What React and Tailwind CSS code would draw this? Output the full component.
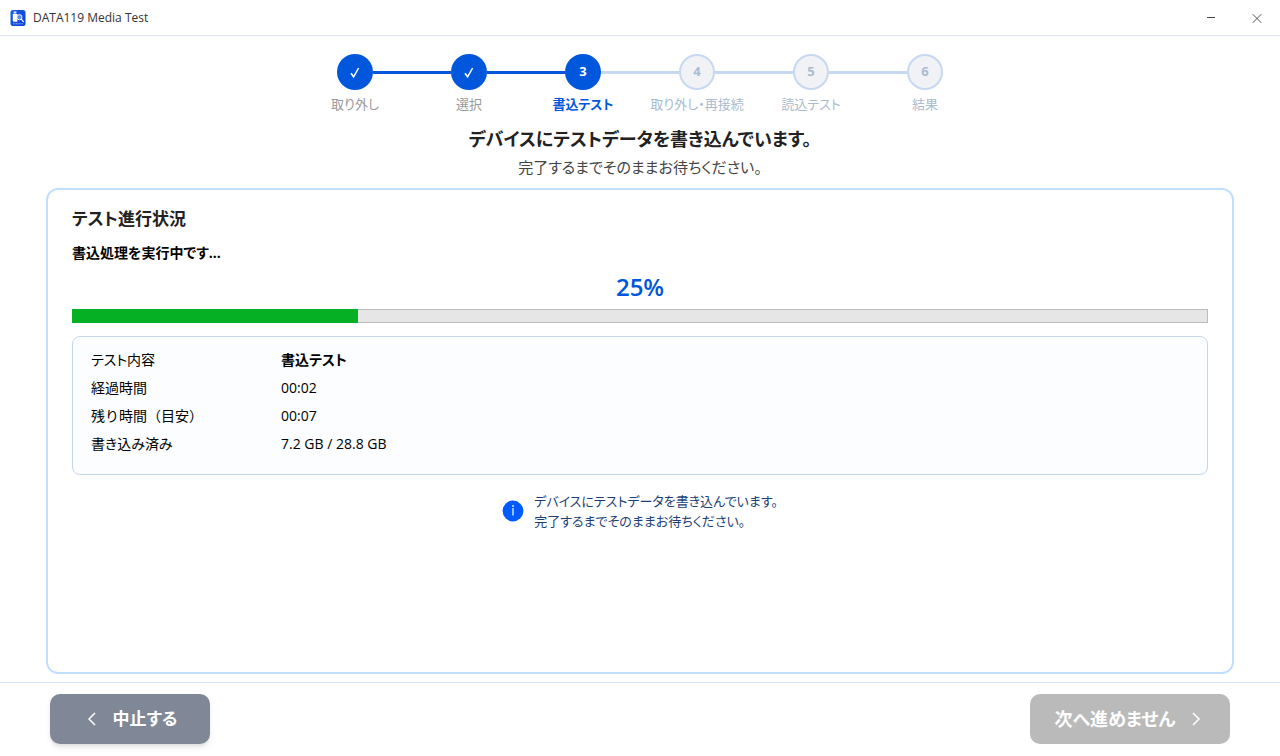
import React from 'react';
import clsx from 'clsx';

const STEPS = ['取り外し', '選択', '書込テスト', '取り外し・再接続', '読込テスト', '結果'];
const CURRENT_STEP = 2;

const progress = {
    barPercent: 25.2,
    label: '25%',
    rows: [
        { name: 'テスト内容', value: '書込テスト', strong: true },
        { name: '経過時間', value: '00:02' },
        { name: '残り時間（目安）', value: '00:07', fullWidth: true },
        { name: '書き込み済み', value: '7.2 GB / 28.8 GB' },
    ],
};

const AppIcon = () => (
    <svg viewBox="0 0 16 16" className="w-4 h-4" aria-hidden="true">
        <defs>
            <linearGradient id="appIconBg" x1="0" y1="0" x2="1" y2="1">
                <stop offset="0" stopColor="#1c5fe8" />
                <stop offset="1" stopColor="#0a3fd0" />
            </linearGradient>
        </defs>
        <rect x="0.5" width="15" height="16" rx="2.5" fill="url(#appIconBg)" />
        <rect x="3.6" y="1.4" width="2.8" height="2.2" fill="#dce8ff" />
        <path d="M2.8 4h4.6v7.8H4.2a1.4 1.4 0 0 1-1.4-1.4z" fill="#fff" />
        <circle cx="9.4" cy="7.2" r="2.6" fill="#5d8df2" stroke="#fff" strokeWidth="0.9" />
        <path d="M11.3 9.2l2.1 2.5" stroke="#fff" strokeWidth="1.2" strokeLinecap="round" />
        <path d="M3 13.8h10" stroke="#a9c4ff" strokeWidth="0.9" strokeDasharray="1 0.5" />
    </svg>
);

const Chevron = ({ points }) => (
    <svg viewBox="0 0 10 14" className="w-[10px] h-[14px]" fill="none" stroke="currentColor" strokeWidth="1.5" aria-hidden="true">
        <polyline points={points} />
    </svg>
);

const TitleBar = () => (
    <header className="flex items-center h-9 pl-[10px] border-b border-[#dde4ec]">
        <AppIcon />
        <span className="flex-1 pl-[7px] text-xs text-[#333333]">DATA119 Media Test</span>
        <button type="button" aria-label="最小化" className="flex items-center justify-center w-[46px] h-full text-[#444444]">
            <svg viewBox="0 0 10 10" className="w-[10px] h-[10px]" stroke="currentColor" aria-hidden="true">
                <path d="M1 4.5h8" />
            </svg>
        </button>
        <button type="button" aria-label="閉じる" className="flex items-center justify-center w-[46px] h-full text-[#555555]">
            <svg viewBox="0 0 10 10" className="w-[10px] h-[10px]" stroke="currentColor" aria-hidden="true">
                <path d="M0.7 1.2l8.6 8.6M9.3 1.2L0.7 9.8" />
            </svg>
        </button>
    </header>
);

const StepLine = ({ hidden, active }) => (
    <span className={clsx('flex-1 h-[3px]', hidden ? 'invisible' : active ? 'bg-[#0057db]' : 'bg-[#c7d9f0]')} />
);

const Stepper = () => (
    <ol className="flex justify-center pt-[18px]">
        {STEPS.map((label, i) => {
            const done = i < CURRENT_STEP;
            const current = i === CURRENT_STEP;
            return (
                <li key={label} className="flex flex-col items-center w-[114px]" aria-current={current ? 'step' : undefined}>
                    <div className="flex items-center w-full">
                        <StepLine hidden={i === 0} active={i <= CURRENT_STEP} />
                        <span
                            className={clsx(
                                'flex items-center justify-center w-9 h-9 rounded-full text-[13px] font-bold',
                                done || current ? 'bg-[#0057db] text-white' : 'bg-[#f0f2f6] border-2 border-[#c7d9f0] text-[#a9bccf]'
                            )}
                        >
                            {done ? (
                                <svg viewBox="0 0 12 14" className="w-3 h-[14px]" fill="none" stroke="currentColor" strokeWidth="1.5" aria-hidden="true">
                                    <path d="M2 8.2l2.6 3.6L9.6 3" />
                                </svg>
                            ) : (
                                i + 1
                            )}
                        </span>
                        <StepLine hidden={i === STEPS.length - 1} active={done} />
                    </div>
                    <span
                        className={clsx(
                            'pt-1 text-[13px] leading-5 whitespace-nowrap',
                            current ? 'font-bold text-[#0057db]' : done ? 'text-[#999999]' : 'text-[#a9bccf]'
                        )}
                    >
                        {label}
                    </span>
                </li>
            );
        })}
    </ol>
);

const ProgressCard = () => (
    <section className="flex-1 mx-[46px] mt-[7px] mb-2 px-6 pt-[15px] pb-6 bg-white border-2 border-[#c4deff] rounded-xl">
        <h2 className="text-[17px] leading-7 font-bold text-[#222222]">テスト進行状況</h2>
        <p className="pt-2 text-sm leading-6 font-bold">書込処理を実行中です...</p>
        <p className="pt-1 pb-1 text-2xl leading-9 font-semibold text-center text-[#0057db]">{progress.label}</p>
        <div
            role="progressbar"
            aria-label="テスト進行状況"
            aria-valuenow={25}
            className="h-[14px] bg-[#e6e6e6] border border-[#bcbcbc]"
        >
            <div className="-m-px h-[14px] bg-[#06b025]" style={{ width: `${progress.barPercent}%` }} />
        </div>

        <dl className="mt-[13px] px-[18px] pt-[9px] pb-4 bg-[#fbfdff] border border-[#c5d6e6] rounded-lg text-sm leading-7">
            {progress.rows.map((row) => (
                <div key={row.name} className="flex">
                    <dt className={clsx('w-[190px]', row.fullWidth && '[font-feature-settings:normal]')}>{row.name}</dt>
                    <dd className={clsx(row.strong && 'font-bold')}>{row.value}</dd>
                </div>
            ))}
        </dl>

        <div className="flex items-center justify-center gap-[10px] pt-4 text-[#1c3f77]">
            <svg viewBox="0 0 22 22" className="w-[22px] h-[22px]" aria-hidden="true">
                <circle cx="11" cy="11" r="10.4" fill="#005bff" />
                <circle cx="11" cy="5.9" r="0.9" fill="#fff" />
                <path d="M11 8v7.6" stroke="#fff" strokeWidth="1.2" />
            </svg>
            <p className="text-[13px] leading-5">
                デバイスにテストデータを書き込んでいます。
                <br />
                完了するまでそのままお待ちください。
            </p>
        </div>
    </section>
);

const App = () => (
    <div className="flex flex-col min-h-screen bg-white text-black font-['Open_Sans','Noto_Sans_CJK_JP',sans-serif] [font-feature-settings:'palt']">
        <TitleBar />
        <main className="flex flex-col flex-1">
            <Stepper />
            <div className="pt-[11px] text-center">
                <h1 className="text-lg leading-7 font-bold text-[#222222]">デバイスにテストデータを書き込んでいます。</h1>
                <p className="text-[15px] leading-7 text-[#444444]">完了するまでそのままお待ちください。</p>
            </div>
            <ProgressCard />
        </main>
        <footer className="flex justify-between px-[50px] pt-[11px] pb-3 border-t border-[#d5e6f8] text-lg font-bold text-white">
            <button type="button" className="flex items-center justify-center gap-4 w-40 h-[50px] pl-1 bg-[#808797] rounded-[10px] text-[17px] shadow-md">
                <Chevron points="8,1 2,7 8,13" />
                中止する
            </button>
            <button type="button" disabled className="flex items-center justify-center gap-4 w-[200px] h-[50px] pr-1 bg-[#bababa] rounded-[10px]">
                次へ進めません
                <Chevron points="2,1 8,7 2,13" />
            </button>
        </footer>
    </div>
);

export default App;
